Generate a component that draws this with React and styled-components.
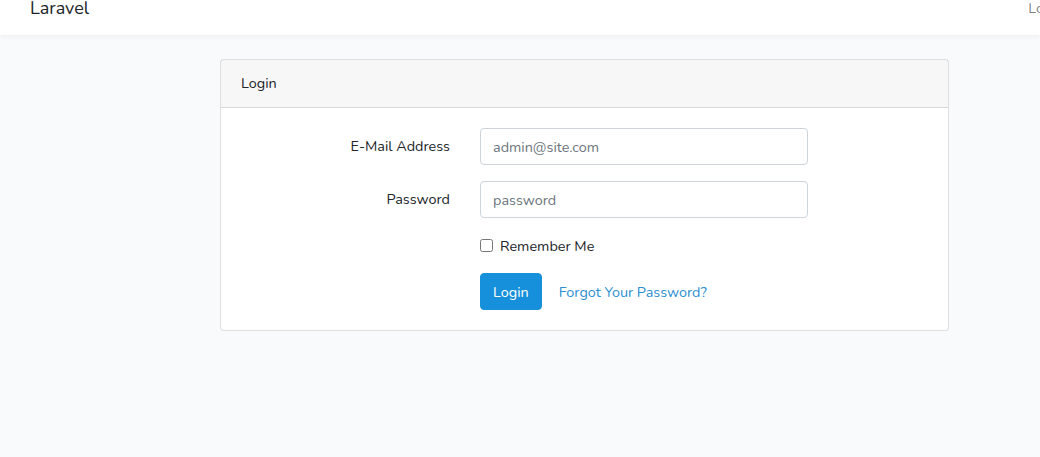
import React from "react";
import styled, { createGlobalStyle } from "styled-components";

const Global = createGlobalStyle`
  html, body { margin: 0; padding: 0; }
  body {
    background: #f8fafc;
    font-family: "Nunito", "Lato", "Noto Sans", sans-serif;
    font-size: 14.4px;
    color: #212529;
    overflow: hidden;
    height: 457px;
  }
  * { box-sizing: border-box; }
`;

const Navbar = styled.nav`
  height: 35px;
  background: #fff;
  box-shadow: 0 2px 4px rgba(0, 0, 0, 0.04);
  overflow: hidden;
  position: relative;
`;

const NavInner = styled.div`
  display: flex;
  align-items: flex-start;
  justify-content: space-between;
  width: calc(100% + 24px);
  padding-left: 30px;
`;

const Brand = styled.a`
  font-size: 18px;
  line-height: 17px;
  color: #212529;
  text-decoration: none;
`;

const NavLink = styled.a`
  font-size: 14.4px;
  line-height: 17px;
  color: rgba(0, 0, 0, 0.5);
  text-decoration: none;
  white-space: nowrap;
`;

const Main = styled.main`
  padding: 24px 0 0 220px;
`;

const Card = styled.div`
  width: 729px;
  background: #fff;
  border: 1px solid rgba(0, 0, 0, 0.125);
  border-radius: 4px;
`;

const CardHeader = styled.div`
  height: 48px;
  display: flex;
  align-items: center;
  padding: 0 20px 1px;
  background: rgba(0, 0, 0, 0.03);
  border-bottom: 1px solid rgba(0, 0, 0, 0.125);
`;

const CardBody = styled.div`
  padding: 20px 20px 20px;
  display: flex;
  flex-direction: column;
  gap: 16px;
`;

const FormRow = styled.div`
  display: grid;
  grid-template-columns: 209px 328px 1fr;
  column-gap: 30px;
  align-items: center;
`;

const Label = styled.label`
  text-align: right;
  line-height: 21px;
`;

const Input = styled.input`
  grid-column: 2;
  height: 37px;
  width: 100%;
  padding: 6px 12px;
  font: inherit;
  font-size: 14.4px;
  color: #495057;
  background: #fff;
  border: 1px solid #ced4da;
  border-radius: 4px;
  outline: none;
  &::placeholder { color: #6c757d; }
`;

const CheckWrap = styled.div`
  grid-column: 2;
  display: flex;
  align-items: center;
  gap: 7px;
  height: 23px;
`;

const Checkbox = styled.input`
  margin: 0;
  width: 13px;
  height: 13px;
`;

const Actions = styled.div`
  grid-column: 2 / span 2;
  display: flex;
  align-items: center;
  gap: 5px;
`;

const Button = styled.button`
  height: 37px;
  padding: 0 12px;
  font: inherit;
  font-size: 14.4px;
  color: #fff;
  background: #1790db;
  border: 1px solid #1790db;
  border-radius: 4px;
`;

const LinkBtn = styled.a`
  padding: 0 12px;
  color: #2d8fd0;
  text-decoration: none;
`;

export default function App() {
  return (
    <>
      <Global />
      <Navbar>
        <NavInner>
          <Brand href="#">Laravel</Brand>
          <NavLink href="#">Login</NavLink>
        </NavInner>
      </Navbar>
      <Main>
        <Card>
          <CardHeader>Login</CardHeader>
          <CardBody>
            <FormRow>
              <Label>E-Mail Address</Label>
              <Input type="email" placeholder="admin@site.com" />
            </FormRow>
            <FormRow>
              <Label>Password</Label>
              <Input type="password" placeholder="password" />
            </FormRow>
            <FormRow>
              <CheckWrap>
                <Checkbox type="checkbox" id="remember" />
                <label htmlFor="remember">Remember Me</label>
              </CheckWrap>
            </FormRow>
            <FormRow>
              <Actions>
                <Button>Login</Button>
                <LinkBtn href="#">Forgot Your Password?</LinkBtn>
              </Actions>
            </FormRow>
          </CardBody>
        </Card>
      </Main>
    </>
  );
}
